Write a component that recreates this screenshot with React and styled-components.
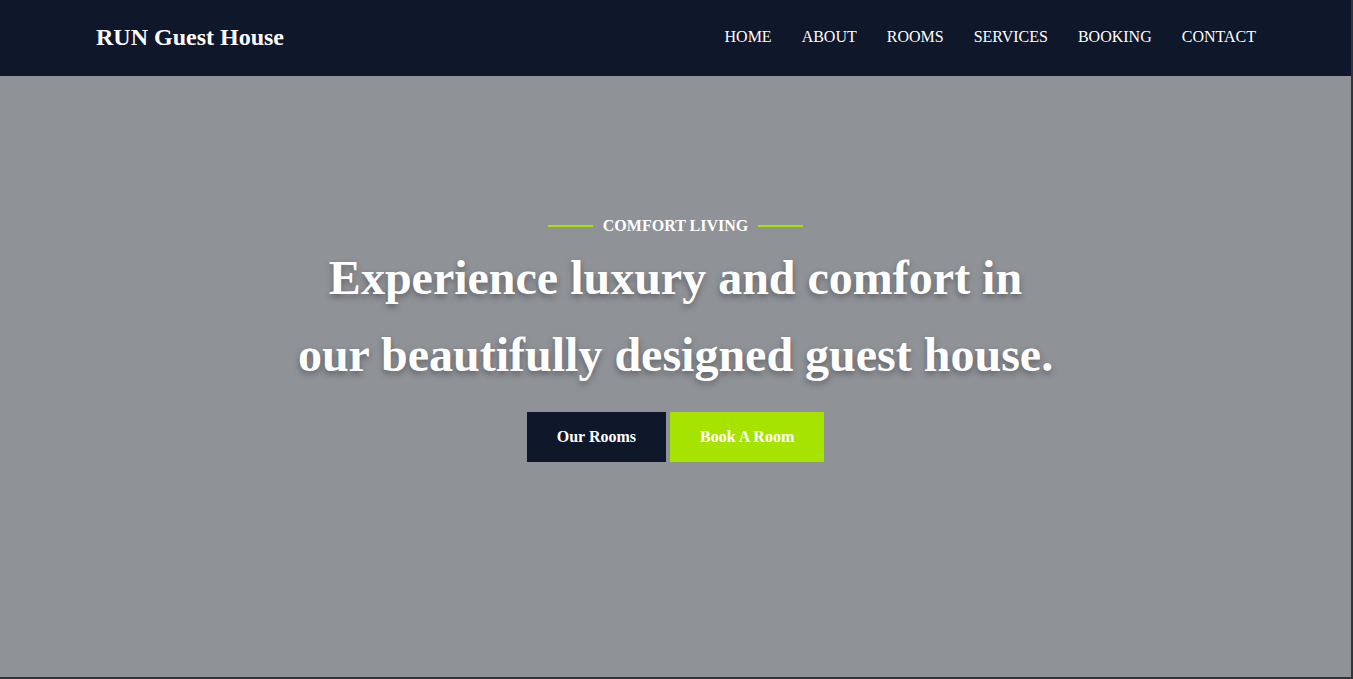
import React from "react";
import styled, { createGlobalStyle } from "styled-components";

const Global = createGlobalStyle`
  html, body { margin: 0; padding: 0; }
  body { font-family: "Liberation Serif", "Times New Roman", serif; background: #2e2e2e; }
  * { box-sizing: border-box; }
`;

const Page = styled.div`
  width: 1353px;
  height: 679px;
  display: flex;
  flex-direction: column;
  border-right: 2px solid #333436;
  border-bottom: 2px solid #333436;
  overflow: hidden;
`;

const NavBar = styled.header`
  height: 76px;
  flex: none;
  background: #0f172a;
  display: flex;
  align-items: center;
  justify-content: space-between;
  padding: 0 95px 2px 96px;
`;

const Logo = styled.a`
  color: #fff;
  font-weight: bold;
  font-size: 24px;
  text-decoration: none;
`;

const Menu = styled.nav`
  display: flex;
  gap: 30px;
`;

const MenuLink = styled.a`
  color: #fff;
  font-size: 16px;
  text-decoration: none;
  text-transform: uppercase;
`;

const Hero = styled.section`
  flex: 1;
  background: #8f9297;
  display: flex;
  flex-direction: column;
  align-items: center;
  padding-top: 140px;
`;

const Eyebrow = styled.div`
  display: flex;
  align-items: center;
  gap: 10px;
  color: #fff;
  font-weight: bold;
  font-size: 16px;
  height: 20px;
`;

const Rule = styled.span`
  width: 45px;
  height: 2px;
  background: #a6e300;
`;

const Title = styled.h1`
  margin: 3px 0 0;
  color: #fff;
  font-size: 48px;
  line-height: 77px;
  font-weight: bold;
  text-align: center;
  text-shadow: 0 3px 6px rgba(0, 0, 0, 0.35);
`;

const Actions = styled.div`
  display: flex;
  gap: 4px;
  margin-top: 19px;
`;

const Button = styled.a`
  display: flex;
  align-items: center;
  justify-content: center;
  height: 50px;
  padding: 0 30px;
  color: #fff;
  font-weight: bold;
  font-size: 16px;
  text-decoration: none;
  background: ${(p) => (p.$accent ? "#a6e300" : "#0f172a")};
`;

export default function App() {
  const links = ["Home", "About", "Rooms", "Services", "Booking", "Contact"];
  return (
    <>
      <Global />
      <Page>
        <NavBar>
          <Logo href="#">RUN Guest House</Logo>
          <Menu>
            {links.map((l) => (
              <MenuLink key={l} href="#">{l}</MenuLink>
            ))}
          </Menu>
        </NavBar>
        <Hero>
          <Eyebrow>
            <Rule />
            COMFORT LIVING
            <Rule />
          </Eyebrow>
          <Title>
            Experience luxury and comfort in
            <br />
            our beautifully designed guest house.
          </Title>
          <Actions>
            <Button href="#">Our Rooms</Button>
            <Button href="#" $accent>Book A Room</Button>
          </Actions>
        </Hero>
      </Page>
    </>
  );
}
